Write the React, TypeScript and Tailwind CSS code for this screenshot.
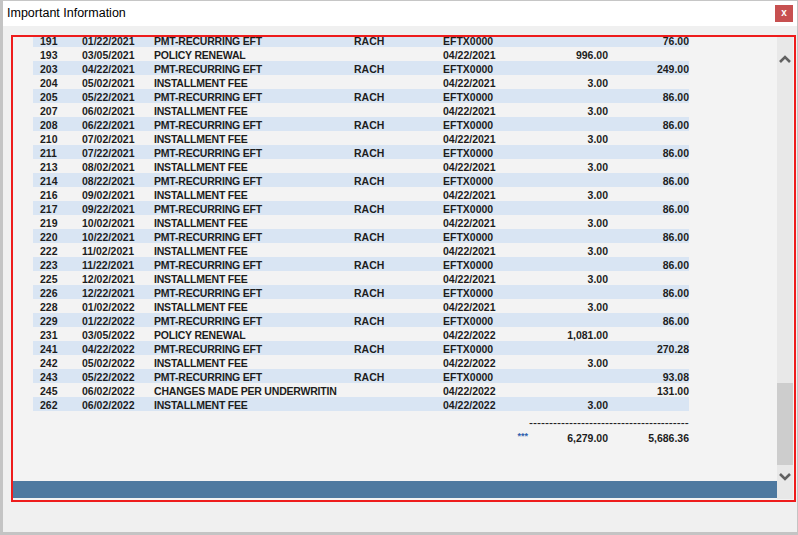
import React from "react"

type Row = {
  id: string
  date: string
  desc: string
  src?: string
  ref: string
  charge?: string
  paid?: string
}

const rows: Row[] = [
  { id: "191", date: "01/22/2021", desc: "PMT-RECURRING EFT", src: "RACH", ref: "EFTX0000", paid: "76.00" },
  { id: "193", date: "03/05/2021", desc: "POLICY RENEWAL", ref: "04/22/2021", charge: "996.00" },
  { id: "203", date: "04/22/2021", desc: "PMT-RECURRING EFT", src: "RACH", ref: "EFTX0000", paid: "249.00" },
  { id: "204", date: "05/02/2021", desc: "INSTALLMENT FEE", ref: "04/22/2021", charge: "3.00" },
  { id: "205", date: "05/22/2021", desc: "PMT-RECURRING EFT", src: "RACH", ref: "EFTX0000", paid: "86.00" },
  { id: "207", date: "06/02/2021", desc: "INSTALLMENT FEE", ref: "04/22/2021", charge: "3.00" },
  { id: "208", date: "06/22/2021", desc: "PMT-RECURRING EFT", src: "RACH", ref: "EFTX0000", paid: "86.00" },
  { id: "210", date: "07/02/2021", desc: "INSTALLMENT FEE", ref: "04/22/2021", charge: "3.00" },
  { id: "211", date: "07/22/2021", desc: "PMT-RECURRING EFT", src: "RACH", ref: "EFTX0000", paid: "86.00" },
  { id: "213", date: "08/02/2021", desc: "INSTALLMENT FEE", ref: "04/22/2021", charge: "3.00" },
  { id: "214", date: "08/22/2021", desc: "PMT-RECURRING EFT", src: "RACH", ref: "EFTX0000", paid: "86.00" },
  { id: "216", date: "09/02/2021", desc: "INSTALLMENT FEE", ref: "04/22/2021", charge: "3.00" },
  { id: "217", date: "09/22/2021", desc: "PMT-RECURRING EFT", src: "RACH", ref: "EFTX0000", paid: "86.00" },
  { id: "219", date: "10/02/2021", desc: "INSTALLMENT FEE", ref: "04/22/2021", charge: "3.00" },
  { id: "220", date: "10/22/2021", desc: "PMT-RECURRING EFT", src: "RACH", ref: "EFTX0000", paid: "86.00" },
  { id: "222", date: "11/02/2021", desc: "INSTALLMENT FEE", ref: "04/22/2021", charge: "3.00" },
  { id: "223", date: "11/22/2021", desc: "PMT-RECURRING EFT", src: "RACH", ref: "EFTX0000", paid: "86.00" },
  { id: "225", date: "12/02/2021", desc: "INSTALLMENT FEE", ref: "04/22/2021", charge: "3.00" },
  { id: "226", date: "12/22/2021", desc: "PMT-RECURRING EFT", src: "RACH", ref: "EFTX0000", paid: "86.00" },
  { id: "228", date: "01/02/2022", desc: "INSTALLMENT FEE", ref: "04/22/2021", charge: "3.00" },
  { id: "229", date: "01/22/2022", desc: "PMT-RECURRING EFT", src: "RACH", ref: "EFTX0000", paid: "86.00" },
  { id: "231", date: "03/05/2022", desc: "POLICY RENEWAL", ref: "04/22/2022", charge: "1,081.00" },
  { id: "241", date: "04/22/2022", desc: "PMT-RECURRING EFT", src: "RACH", ref: "EFTX0000", paid: "270.28" },
  { id: "242", date: "05/02/2022", desc: "INSTALLMENT FEE", ref: "04/22/2022", charge: "3.00" },
  { id: "243", date: "05/22/2022", desc: "PMT-RECURRING EFT", src: "RACH", ref: "EFTX0000", paid: "93.08" },
  { id: "245", date: "06/02/2022", desc: "CHANGES MADE PER UNDERWRITIN", ref: "04/22/2022", paid: "131.00" },
  { id: "262", date: "06/02/2022", desc: "INSTALLMENT FEE", ref: "04/22/2022", charge: "3.00" },
]

const cols = "grid grid-cols-[42px_72px_200px_89px_85px_80px_81px] pl-[7px] w-[656px] h-[14px] leading-[14px] pt-[1px]"

const Chevron = ({ up }: { up?: boolean }) => (
  <svg width="12" height="8" viewBox="0 0 12 8">
    <polyline
      points={up ? "1,7 6,2 11,7" : "1,1 6,6 11,1"}
      fill="none"
      stroke="#616161"
      strokeWidth="2.6"
    />
  </svg>
)

export default function App() {
  return (
    <div className="flex w-[798px] h-[535px] bg-[#c4c4c4] font-['Liberation_Sans',Arial,sans-serif]">
      <div className="w-[3px] shrink-0" />
      <div className="flex flex-col w-[794px] h-[532px] bg-[#f0f0f0]">
        {/* title bar */}
        <div className="flex items-center justify-between h-[26px] bg-white border-t border-[#c6c6c6] pl-[4px] pr-[4px]">
          <span className="text-[12.5px] text-black">Important Information</span>
          <div className="flex items-center justify-center w-[18px] h-[17px] bg-[#c75050] text-white text-[10px] font-bold leading-none pb-[2px]">
            x
          </div>
        </div>

        {/* body */}
        <div className="pt-[9px] pl-[8px] pr-[1px]">
          <div className="w-[785px] h-[467px] bg-[#ee1c1c] p-[2px]">
            <div className="flex h-full bg-[#f3f3f3] pr-[1px] pb-[1px]">
              <div className="flex flex-col w-[764px]">
                <div className="flex-1 overflow-hidden pl-[20px] text-[10.5px] font-bold text-[#1d1d1d]">
                  <div className="-mt-[4px]">
                    {rows.map((r, i) => (
                      <div key={r.id} className={`${cols} ${i % 2 === 0 ? "bg-[#d9e5f3]" : ""}`}>
                        <span>{r.id}</span>
                        <span>{r.date}</span>
                        <span className="whitespace-nowrap tracking-[-0.2px]">{r.desc}</span>
                        <span>{r.src}</span>
                        <span>{r.ref}</span>
                        <span className="text-right">{r.charge}</span>
                        <span className="text-right">{r.paid}</span>
                      </div>
                    ))}
                    <div className={`${cols} mt-[4px]`}>
                      <span className="col-start-6 col-span-2 pl-[1px] whitespace-nowrap font-normal text-[12px]">
                        {"-".repeat(40)}
                      </span>
                    </div>
                    <div className={`${cols} mt-[1px]`}>
                      <span className="col-start-5 text-right text-[9px] leading-[10px] text-[#2f5fae]">***</span>
                      <span className="text-right">6,279.00</span>
                      <span className="text-right">5,686.36</span>
                    </div>
                  </div>
                </div>
                <div className="h-[17px] mb-[1px] bg-[#4e79a0]" />
              </div>

              {/* scrollbar */}
              <div className="flex flex-col w-[16px] bg-[#e8e8e8]">
                <div className="flex items-center justify-center h-[43px]">
                  <Chevron up />
                </div>
                <div className="flex flex-col justify-end flex-1">
                  <div className="h-[82px] bg-[#cdcdcd]" />
                </div>
                <div className="flex items-center justify-center h-[24px]">
                  <Chevron />
                </div>
                <div className="h-[10px]" />
              </div>
            </div>
          </div>
        </div>
      </div>
      <div className="w-[1px] shrink-0" />
    </div>
  )
}
